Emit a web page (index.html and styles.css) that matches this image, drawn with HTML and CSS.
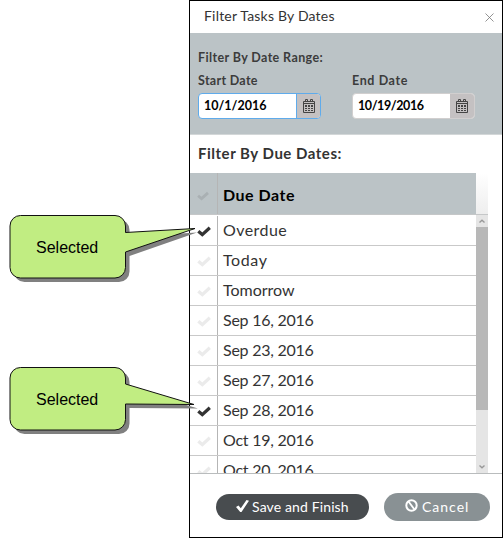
FILE: index.html
```
<!DOCTYPE html>
<html lang="en">
<head>
<meta charset="utf-8">
<title>Filter Tasks By Dates</title>
<link rel="stylesheet" href="styles.css">
</head>
<body>
<svg class="defs" width="0" height="0">
  <symbol id="check" viewBox="0 0 14 11"><path d="M1.300 5.200L5.300 8.600 12.800 1.800" fill="none" stroke="currentColor" stroke-width="3.300"/></symbol>
  <symbol id="cal" viewBox="0 0 12 14"><path d="M.5 2.5h11v11H.5zM.5 4.5h11M2.5 2V.5h2V2M7.5 2V.5h2V2" fill="none" stroke="currentColor"/><path d="M2 6h2v2H2zM5 6h2v2H5zM8 6h2v2H8zM2 9h2v1H2zM5 9h2v1H5zM8 9h2v1H8zM2 11h2v1H2zM5 11h2v1H5zM8 11h2v1H8z" fill="currentColor"/></symbol>
</svg>
<main class="dialog">
  <header class="title"><span class="t-title">Filter Tasks By Dates</span>
    <svg class="close" width="9" height="9" viewBox="0 0 9 9"><path d="M.5 .5l8 8M8.5 .5l-8 8" stroke="#777" stroke-width=".8"/></svg>
  </header>
  <section class="range">
    <div class="label t-range">Filter By Date Range:</div>
    <div class="fields">
      <div class="field"><div class="label t-start">Start Date</div>
        <div class="input focus"><span class="value t-d1">10/1/2016</span><span class="pick"><svg width="12" height="14"><use href="#cal"/></svg></span></div></div>
      <div class="field"><div class="label t-end">End Date</div>
        <div class="input"><span class="value t-d2">10/19/2016</span><span class="pick"><svg width="12" height="14"><use href="#cal"/></svg></span></div></div>
    </div>
  </section>
  <h2><span class="t-h2">Filter By Due Dates:</span></h2>
  <div class="thead"><div class="hcells"><div class="ck hck"><svg width="12" height="10"><use href="#check"/></svg></div><div class="hname"><span class="t-due">Due Date</span></div></div><div class="fade"></div></div>
  <div class="tbody">
    <div class="rows">
      <div class="row on"><div class="ck"><svg width="14" height="11"><use href="#check"/></svg></div><div class="cell"><span class="t-over">Overdue</span></div></div>
      <div class="row"><div class="ck"><svg width="14" height="11"><use href="#check"/></svg></div><div class="cell"><span class="t-today">Today</span></div></div>
      <div class="row"><div class="ck"><svg width="14" height="11"><use href="#check"/></svg></div><div class="cell"><span class="t-tom">Tomorrow</span></div></div>
      <div class="row"><div class="ck"><svg width="14" height="11"><use href="#check"/></svg></div><div class="cell"><span class="t-date">Sep 16, 2016</span></div></div>
      <div class="row"><div class="ck"><svg width="14" height="11"><use href="#check"/></svg></div><div class="cell"><span class="t-date">Sep 23, 2016</span></div></div>
      <div class="row"><div class="ck"><svg width="14" height="11"><use href="#check"/></svg></div><div class="cell"><span class="t-date">Sep 27, 2016</span></div></div>
      <div class="row on"><div class="ck"><svg width="14" height="11"><use href="#check"/></svg></div><div class="cell"><span class="t-date">Sep 28, 2016</span></div></div>
      <div class="row"><div class="ck"><svg width="14" height="11"><use href="#check"/></svg></div><div class="cell"><span class="t-date">Oct 19, 2016</span></div></div>
      <div class="row"><div class="ck"><svg width="14" height="11"><use href="#check"/></svg></div><div class="cell"><span class="t-date">Oct 20, 2016</span></div></div>
    </div>
    <div class="scroll">
      <svg class="arrow" width="12" height="12"><path d="M3.5 7.5L6 5.2 8.500 7.500" fill="none" stroke="#999" stroke-width="1.4"/></svg>
      <div class="thumb"></div>
      <svg class="arrow down" width="12" height="12"><path d="M3.500 4.500L6 6.800 8.500 4.500" fill="none" stroke="#999" stroke-width="1.400"/></svg>
    </div>
  </div>
  <footer>
    <button class="save"><svg width="13" height="12" viewBox="0 0 13 12"><path d="M0 7l2.500-1.500L4.800 8.300 10.500 0 13 .8 5.500 12H4.200z" fill="#fff"/></svg><span class="t-save">Save and Finish</span></button>
    <button class="cancel"><svg width="13" height="13" viewBox="0 0 13 13"><circle cx="6.500" cy="6.500" r="5.200" fill="none" stroke="#fff" stroke-width="2"/><path d="M3.500 2.500l6 8" stroke="#fff" stroke-width="1.800"/></svg><span class="t-cancel">Cancel</span></button>
  </footer>
</main>
<div class="callout first"><svg width="205" height="72"><path class="shade" transform="translate(4 4)" d="M20.500 3.500H115A10.500 10.500 0 0 1 125.500 14V20.500L193 16.500 125.500 40V55.500A10.500 10.500 0 0 1 115 66H20.500A10.500 10.500 0 0 1 10 55.500V14A10.500 10.500 0 0 1 20.500 3.500z"/><path class="bubble" d="M20.500 3.500H115A10.500 10.500 0 0 1 125.500 14V20.500L195 16.500 125.500 40V55.500A10.500 10.500 0 0 1 115 66H20.500A10.500 10.500 0 0 1 10 55.500V14A10.500 10.500 0 0 1 20.500 3.500z"/></svg><span>Selected</span></div>
<div class="callout second"><svg width="205" height="72"><path class="shade" transform="translate(4 4)" d="M20.500 3.500H115A10.500 10.500 0 0 1 125.500 14V20L194 40.500 125.500 40V55.500A10.500 10.500 0 0 1 115 66H20.500A10.500 10.500 0 0 1 10 55.500V14A10.500 10.500 0 0 1 20.500 3.500z"/><path class="bubble" d="M20.500 3.500H115A10.500 10.500 0 0 1 125.500 14V20L194 40.500 125.500 40V55.500A10.500 10.500 0 0 1 115 66H20.500A10.500 10.500 0 0 1 10 55.500V14A10.500 10.500 0 0 1 20.500 3.500z"/></svg><span>Selected</span></div>
</body>
</html>
```
FILE: styles.css
```
*{box-sizing:border-box}
body{margin:0;width:503px;height:538px;background:#fff;position:relative;overflow:hidden;font-family:"Century Gothic",Lato,sans-serif;color:#333}
svg{display:block;flex:none}
.defs{position:absolute}
span{white-space:nowrap}
.dialog{margin-left:189px;width:314px;height:538px;border:1px solid #000;display:flex;flex-direction:column}
.title{height:32px;display:flex;align-items:center;justify-content:space-between;padding:0 8px 4px 14px;font-size:14px}
.t-title{letter-spacing:.2px}
.close{margin-top:4px}
.range{height:102px;background:#bbc3c6;padding:16px 8px 0;border-bottom:1px solid #d3d7d8}
.label{font-size:12.500px;font-weight:700;line-height:18px;color:#3c3c3c}
.t-range{letter-spacing:.38px}
.t-start{letter-spacing:.3px}
.t-end{letter-spacing:.6px}
.fields{display:flex;gap:31px;margin-top:5px}
.input{display:flex;width:123px;height:26px;margin-top:3px;border:1px solid #d1cfcf;border-radius:4px;background:#fff;overflow:hidden}
.input.focus{border-color:#5fabeb}
.value{flex:1;padding-left:5px;font-size:12.500px;font-weight:700;line-height:24px;color:#000}
.t-d2{letter-spacing:-.4px}
.pick{width:24px;background:#c4c1c2;display:flex;align-items:center;justify-content:center;color:#444}
.focus .pick{border-left:1px solid #5fabeb}
h2{margin:0;height:38px;padding:0 8px;font-size:15px;line-height:37px}
.t-h2{letter-spacing:.52px}
.thead{height:42px;width:298px;display:flex;border-bottom:1px solid #c5c7c8}
.hcells{width:286px;background:#bbc3c6;display:flex}
.ck{width:28px;border-right:1px solid #b5b5b5;display:flex;align-items:center;padding-left:7px;color:#ebebeb}
.hck{color:#a9b0b3;padding-top:4px}
.hname{padding:2px 0 0 5px;font-size:16px;font-weight:700;line-height:40px;color:#000}
.t-due{letter-spacing:.5px}
.fade{flex:1;background:linear-gradient(#fff,#eee)}
.tbody{height:258px;display:flex;overflow:hidden}
.rows{width:286px;padding-top:1px}
.row{height:30px;display:flex;border-bottom:1px solid #c9c9c9}
.on .ck{color:#333}
.row .ck svg{margin-top:2px}
.cell{padding-left:5px;font-size:16px;line-height:27px}
.t-over{letter-spacing:.45px}
.t-today{letter-spacing:.6px}
.t-date{letter-spacing:-.25px}
.scroll{width:12px;background:#e5e5e5;display:flex;flex-direction:column}
.thumb{height:183px;background:#b8b8b8}
.down{margin-top:auto}
footer{border-top:1px solid #b9bcbd;flex:1;display:flex;align-items:flex-start;padding:19px 0 0 26px}
button{font:14px "Century Gothic",Lato,sans-serif;color:#fff;border:0;padding:0;display:flex;align-items:center}
.save{width:153px;height:26px;margin-top:1px;border-radius:13px;background:#484c4f;padding-left:20px;gap:3px}
.save svg{margin-top:-3px}
.t-save{letter-spacing:.13px}
.cancel{width:106px;height:28px;margin-left:15px;border-radius:14px;background:#899194;padding-left:21px;gap:4px}
.cancel svg{margin-top:-3px}
.t-cancel{letter-spacing:1px}
.t-save,.t-cancel{margin-top:-1px}
.callout{position:absolute;left:0;top:212px;width:205px;height:72px}
.second{top:364px}
.callout span{position:absolute;left:36px;top:26px;font:16px/19px "Liberation Sans",Arial,sans-serif;color:#000}
.shade{fill:#808080}
.bubble{fill:#c1ed82;stroke:#111}
```
